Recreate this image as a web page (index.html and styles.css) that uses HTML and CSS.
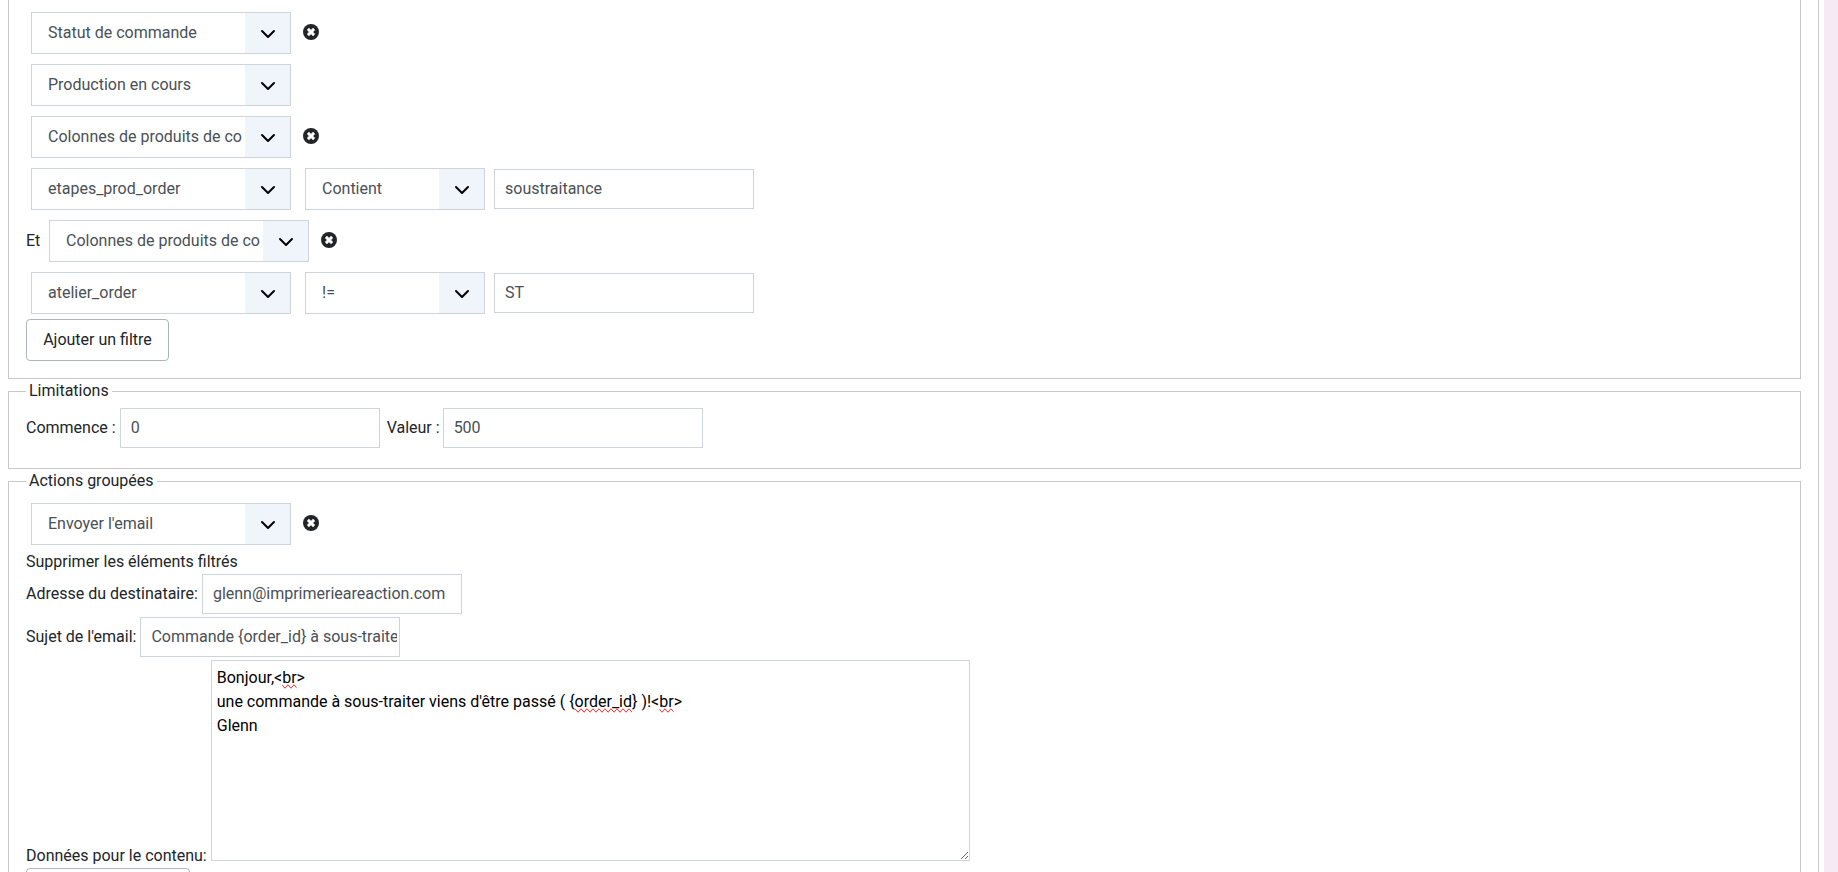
FILE: index.html
```html
<!DOCTYPE html>
<html lang="fr">
<head>
  <meta charset="UTF-8" />
  <meta name="viewport" content="width=device-width, initial-scale=1.0"/>
  <title>Actions groupées</title>
  <link rel="stylesheet" href="styles.css">
</head>
<body>

<svg class="sprite" width="0" height="0">
  <symbol id="icon-remove" viewBox="0 0 16 16">
    <circle cx="8" cy="8" r="8" fill="#212529"/>
    <path d="M4.9 4.9l6.2 6.2M11.1 4.9l-6.2 6.2" stroke="#fff" stroke-width="2.9"/>
  </symbol>
</svg>

<main class="panel">

  <!-- Filters -->
  <section class="group group-filters">
    <div class="filter-row">
      <select class="form-select"><option>Statut de commande</option></select>
      <svg class="remove"><use href="#icon-remove"/></svg>
    </div>
    <div class="filter-row">
      <select class="form-select"><option>Production en cours</option></select>
    </div>
    <div class="filter-row">
      <select class="form-select"><option>Colonnes de produits de commande</option></select>
      <svg class="remove"><use href="#icon-remove"/></svg>
    </div>
    <div class="filter-row">
      <select class="form-select"><option>etapes_prod_order</option></select>
      <select class="form-select operator"><option>Contient</option></select>
      <input class="form-control value" type="text" value="soustraitance">
    </div>
    <div class="filter-row joined">
      <span class="and">Et</span>
      <select class="form-select"><option>Colonnes de produits de commande</option></select>
      <svg class="remove"><use href="#icon-remove"/></svg>
    </div>
    <div class="filter-row">
      <select class="form-select"><option>atelier_order</option></select>
      <select class="form-select operator"><option>!=</option></select>
      <input class="form-control value" type="text" value="ST">
    </div>
    <button class="btn" type="button">Ajouter un filtre</button>
  </section>

  <!-- Limits -->
  <fieldset class="group group-limits">
    <legend>Limitations</legend>
    <div class="field-row">
      <label for="start">Commence :</label>
      <input class="form-control" id="start" type="text" value="0">
      <label class="second" for="limit">Valeur :</label>
      <input class="form-control" id="limit" type="text" value="500">
    </div>
  </fieldset>

  <!-- Actions -->
  <fieldset class="group group-actions">
    <legend>Actions groupées</legend>
    <div class="filter-row">
      <select class="form-select"><option>Envoyer l'email</option></select>
      <svg class="remove"><use href="#icon-remove"/></svg>
    </div>
    <div class="note">Supprimer les éléments filtrés</div>
    <div class="field-row">
      <label for="address">Adresse du destinataire:</label>
      <input class="form-control" id="address" type="text" value="glenn@imprimerieareaction.com">
    </div>
    <div class="field-row">
      <label for="subject">Sujet de l'email:</label>
      <input class="form-control" id="subject" type="text" value="Commande {order_id} à sous-traiter">
    </div>
    <div class="field-row body-row">
      <label>Données pour le contenu:</label>
      <div class="editor" contenteditable="true" spellcheck="false">Bonjour,&lt;<span class="typo">br</span>&gt;<br>une commande à sous-traiter viens d'être passé ( {<span class="typo">order_id</span>} )!&lt;<span class="typo">br</span>&gt;<br>Glenn</div>
    </div>
    <button class="btn btn-last" type="button"></button>
  </fieldset>

</main>

</body>
</html>
```
FILE: styles.css
```css
* {
  box-sizing: border-box;
}

html {
  height: 100%;
  overflow: hidden;
}

body {
  margin: 0;
  height: 100%;
  overflow: hidden;
  background: #f6eaf5;
  font-family: Roboto, sans-serif;
  font-size: 16px;
  line-height: 24px;
  color: #212529;
}

.sprite {
  display: block;
}

.panel {
  width: 1824px;
  height: 872px;
  overflow: hidden;
  padding: 0 23px 0 8px;
  background: linear-gradient(#c8c8c8, #c8c8c8) 1818px 0 / 1px 100% no-repeat #fff;
}

.group {
  margin: 0;
  min-width: 0;
  width: 1793px;
  border: 1px solid #c8c8c8;
  padding: 0 17px;
}

.group-filters {
  height: 379px;
  border-top: 0;
  padding-top: 12px;
}

.group-limits {
  height: 90px;
}

.group-actions {
  height: 440px;
}

legend {
  display: block;
  height: 24px;
  padding: 0 3px;
}

.filter-row {
  display: flex;
  align-items: center;
  height: 42px;
  margin: 0 0 10px 5px;
}

.filter-row.joined {
  margin-left: 0;
}

.and {
  width: 23px;
}

.form-select {
  appearance: none;
  width: 260px;
  height: 42px;
  margin: 0;
  padding: 0 48px 0 16px;
  border: 1px solid #ced4da;
  border-radius: 0;
  color: #495057;
  font: inherit;
  background:
    url("data:image/svg+xml,%3Csvg xmlns='http://www.w3.org/2000/svg' viewBox='0 0 16 16'%3E%3Cpath fill='none' stroke='%23000' stroke-linecap='round' stroke-linejoin='round' stroke-width='2' d='M2 5l6 6 6-6'/%3E%3C/svg%3E") right 14px top 13px / 16px 16px no-repeat,
    linear-gradient(#f0f4fb, #f0f4fb) right 0 top 0 / 45px 100% no-repeat,
    #fff;
}

.form-select.operator {
  width: 180px;
  margin-left: 14px;
}

.form-control {
  width: 260px;
  height: 40px;
  margin: 0;
  padding: 0 2px 2px 10px;
  border: 1px solid #ced4da;
  border-radius: 0;
  background: #fff;
  color: #495057;
  font: inherit;
}

.form-control.value {
  margin-left: 9px;
}

.remove {
  width: 16px;
  height: 16px;
  margin: 0 0 2px 12px;
}

.btn {
  display: block;
  width: 143px;
  height: 42px;
  margin-top: -5px;
  padding: 0;
  border: 1px solid #acb5be;
  border-radius: 4px;
  background: #fff;
  color: #212529;
  font: inherit;
}

.field-row {
  display: flex;
  align-items: center;
  height: 40px;
  margin-bottom: 3px;
  white-space: nowrap;
}

.field-row label {
  margin-right: 4px;
}

.field-row .second {
  margin-left: 7px;
  margin-right: 3px;
}

.group-limits .field-row {
  margin-top: 5px;
}

.group-actions .filter-row {
  margin-top: 10px;
  margin-bottom: 5px;
}

.note {
  margin-bottom: 0;
}

.body-row {
  height: 201px;
  align-items: flex-end;
  margin-bottom: 7px;
}

.body-row label {
  margin-bottom: -7px;
}

.editor {
  width: 759px;
  height: 201px;
  padding: 5px;
  overflow: auto;
  resize: both;
  border: 1px solid #ced4da;
  background: #fff;
  color: #000;
}

.typo {
  text-decoration-line: spelling-error;
}

.btn-last {
  width: 164px;
  margin-top: 0;
}
```
